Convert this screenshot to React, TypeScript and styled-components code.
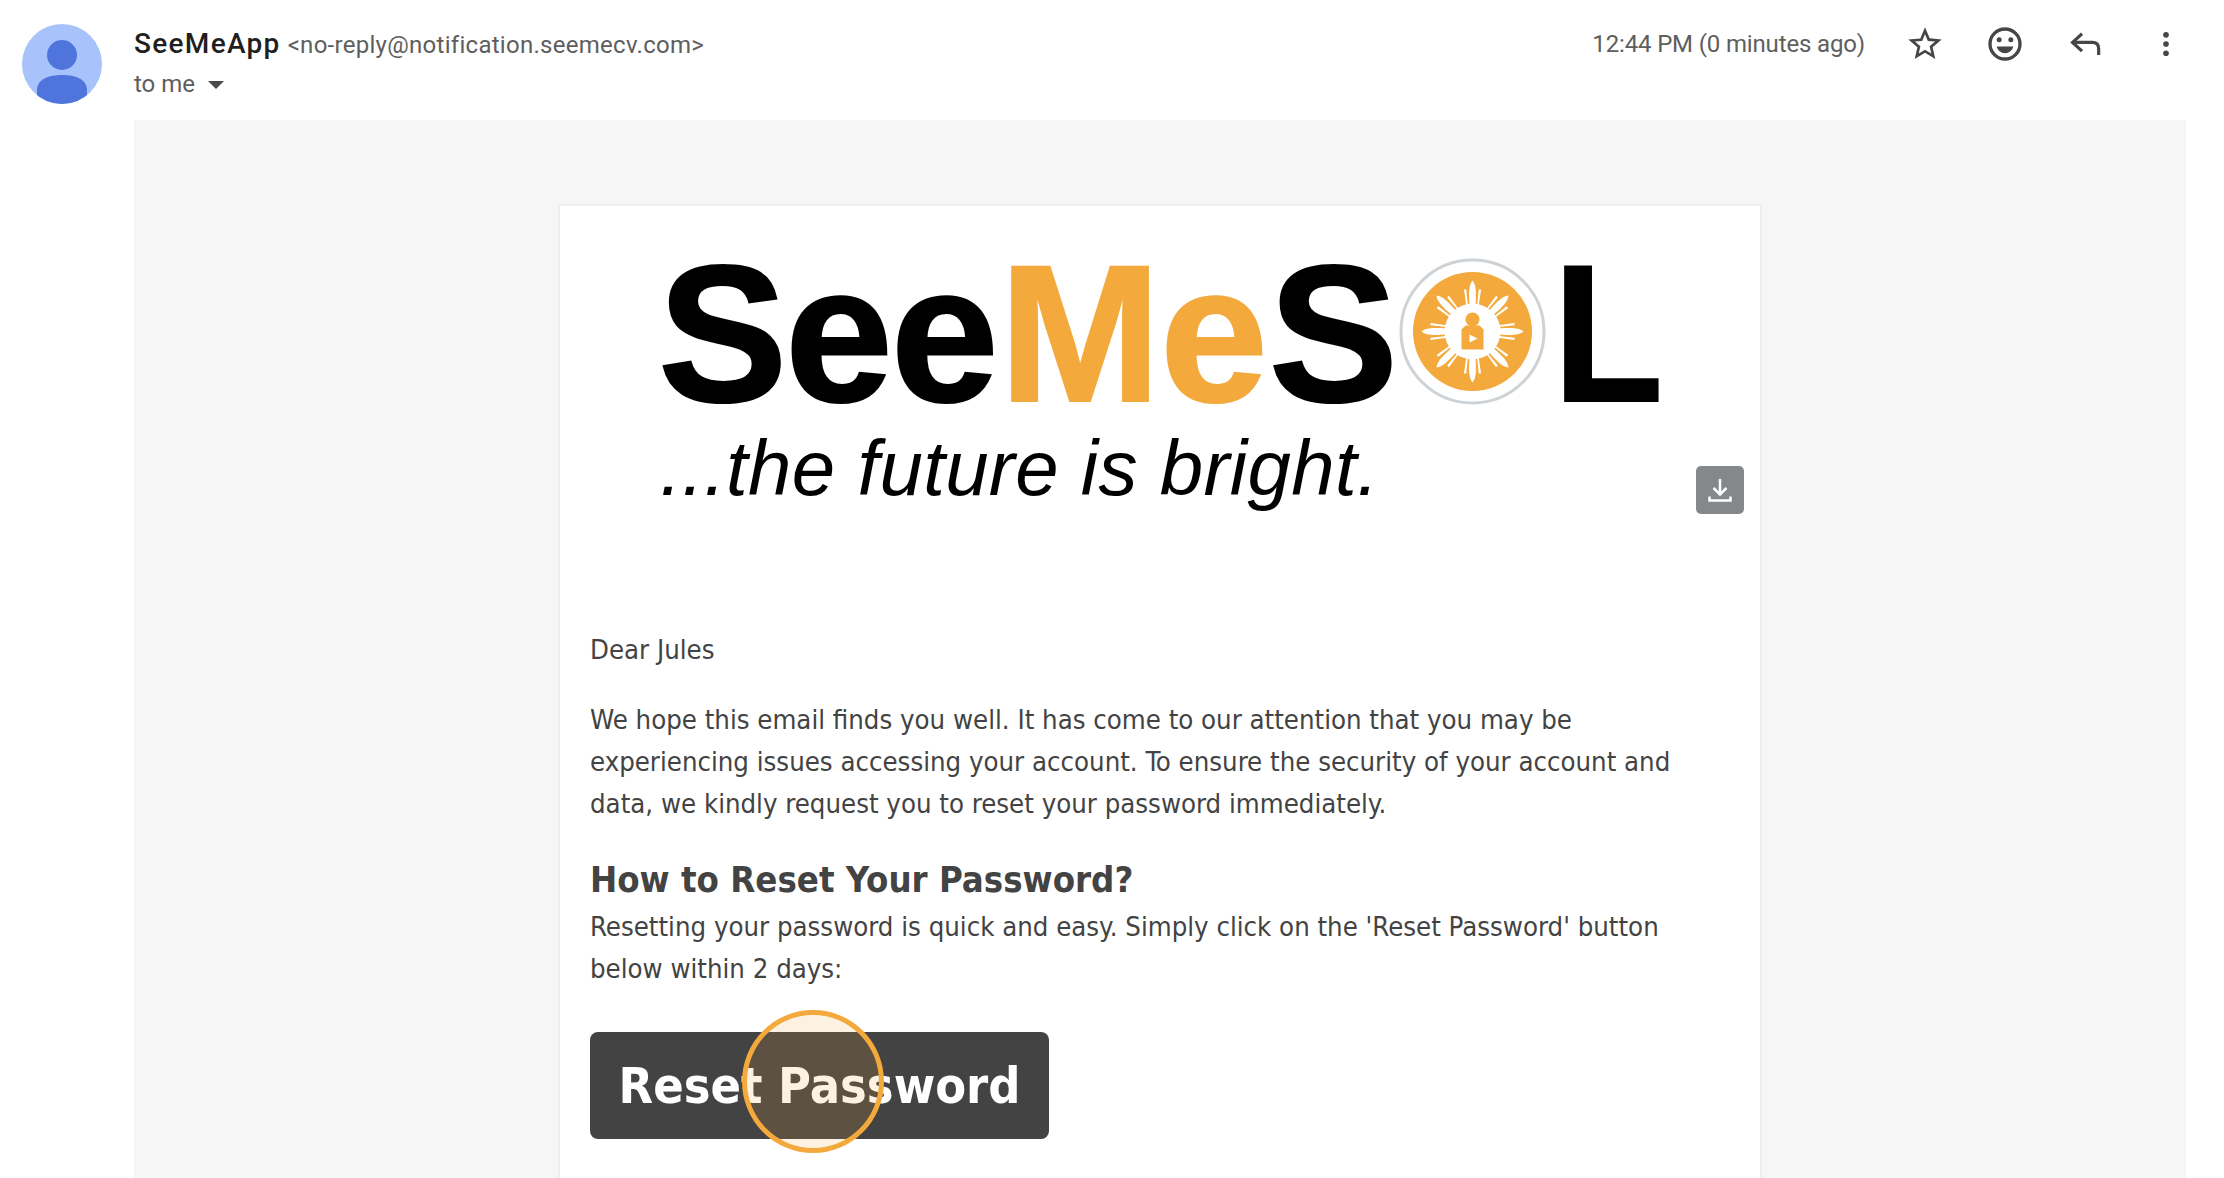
import React from 'react';
import styled, { createGlobalStyle } from 'styled-components';

const Global = createGlobalStyle`
  html, body { margin: 0; padding: 0; background: #fff; height: 1178px; overflow: hidden; }
  * { box-sizing: border-box; }
`;

const Page = styled.div`
  width: 2224px;
  height: 1178px;
  overflow: hidden;
  font-family: Roboto, "Liberation Sans", sans-serif;
`;

const Header = styled.header`
  height: 120px;
  display: flex;
  padding: 24px 0 0 22px;
`;

const Avatar = styled.svg`
  width: 80px;
  height: 80px;
  flex: none;
`;

const Sender = styled.div`
  margin-left: 32px;
  flex: 1;
  display: flex;
  flex-direction: column;
`;

const FromLine = styled.div`
  display: flex;
  align-items: baseline;
  height: 40px;
  line-height: 40px;
`;

const Name = styled.span`
  font-size: 28px;
  font-weight: 500;
  letter-spacing: 1.3px;
  color: #1f1f1f;
`;

const Email = styled.span`
  font-size: 24px;
  color: #5e5e5e;
  margin-left: 7px;
  letter-spacing: 0.28px;
`;

const ToLine = styled.div`
  display: flex;
  align-items: center;
  height: 40px;
  font-size: 24px;
  color: #5e5e5e;
`;

const Caret = styled.span`
  width: 0;
  height: 0;
  margin-left: 13px;
  margin-top: 2px;
  border-left: 8.5px solid transparent;
  border-right: 8.5px solid transparent;
  border-top: 8px solid #4a4a4a;
`;

const Meta = styled.div`
  display: flex;
  align-items: flex-start;
  padding-right: 38px;
`;

const Time = styled.span`
  font-size: 24px;
  line-height: 40px;
  color: #5e5e5e;
  margin-right: 40px;
  letter-spacing: -0.15px;
`;

const IconBox = styled.span`
  width: 40px;
  height: 40px;
  display: flex;
  align-items: center;
  justify-content: center;
  margin-left: ${(p: { $gap: number }) => p.$gap}px;
`;

const Canvas = styled.main`
  margin-left: 134px;
  width: 2052px;
  height: 1058px;
  background: #f6f6f6;
  padding-top: 84px;
  display: flex;
  justify-content: center;
  align-items: flex-start;
`;

const Card = styled.article`
  width: 1204px;
  height: 1000px;
  background: #fff;
  border: 2px solid #eeeeee;
  border-bottom: none;
  padding: 0 0 0 30px;
`;

const LogoBlock = styled.div`
  position: relative;
  height: 423px;
  margin-left: -30px;
  padding: 30.5px 0 0 98px;
  font-family: "Liberation Sans", Arial, sans-serif;
`;

const LogoRow = styled.div`
  display: flex;
  align-items: center;
  height: 194px;
`;

const LogoWord = styled.span<{ $orange?: boolean; $tight?: boolean; $before?: number }>`
  font-size: 194px;
  line-height: 194px;
  font-weight: 700;
  letter-spacing: ${(p) => (p.$tight ? -2.3 : -1)}px;
  margin-left: ${(p) => p.$before ?? 0}px;
  -webkit-text-stroke: 2px ${(p) => (p.$orange ? '#f3a93c' : '#000')};
  color: ${(p) => (p.$orange ? '#f3a93c' : '#000')};
`;

const LogoL = styled(LogoWord)`
  transform: scaleX(0.93);
  transform-origin: left center;
`;

const Emblem = styled.svg`
  width: 147px;
  height: 147px;
  flex: none;
  margin: 0 7px 4.600px 2px;
`;

const Tagline = styled.div`
  font-size: 78px;
  line-height: 72px;
  font-style: italic;
  color: #000;
  margin: 1px 0 0 2px;
  letter-spacing: 0.33px;
`;

const DownloadButton = styled.span`
  position: absolute;
  left: 1136px;
  top: 260px;
  width: 48px;
  height: 48px;
  border-radius: 5px;
  background: #84888b;
  display: flex;
  align-items: center;
  justify-content: center;
`;

const Body = styled.div`
  font-family: "DejaVu Sans", Tahoma, sans-serif;
  font-stretch: condensed;
  font-size: 27.300px;
  line-height: 42px;
  color: #434343;
  padding-right: 60px;
`;

const Para = styled.p`
  margin: 0 0 28px;
`;

const Heading = styled.h2`
  margin: 0;
  font-size: 36.200px;
  line-height: 53px;
  font-weight: 700;
  color: #434343;
`;

const Note = styled.p`
  margin: 0 0 42px;
`;

const ButtonWrap = styled.div`
  position: relative;
  width: 459px;
`;

const ResetButton = styled.a`
  display: flex;
  align-items: center;
  justify-content: center;
  width: 459px;
  height: 107px;
  background: #434343;
  color: #fff;
  border-radius: 8px;
  font-size: 50px;
  font-weight: 700;
`;

const Highlight = styled.span`
  position: absolute;
  left: 152px;
  top: -22px;
  width: 142px;
  height: 143px;
  border-radius: 50%;
  border: 5px solid #f3a93c;
  background: rgba(243, 169, 60, 0.15);
`;

const rays = [0, 45, 90, 135, 180, 225, 270, 315];

export default function App() {
  return (
    <Page>
      <Global />
      <Header>
        <Avatar viewBox="0 0 80 80">
          <defs>
            <clipPath id="avatar-clip"><circle cx="40" cy="40" r="40" /></clipPath>
          </defs>
          <circle cx="40" cy="40" r="40" fill="#a8c2fb" />
          <g clipPath="url(#avatar-clip)" fill="#4f74dc">
            <ellipse cx="40" cy="31" rx="15" ry="15" />
            <path d="M15 66 C15 55 27 51 40 51 C53 51 65 55 65 66 V80 H15 Z" />
          </g>
        </Avatar>
        <Sender>
          <FromLine>
            <Name>SeeMeApp</Name>
            <Email>&lt;no-reply@notification.seemecv.com&gt;</Email>
          </FromLine>
          <ToLine>
            to me
            <Caret />
          </ToLine>
        </Sender>
        <Meta>
          <Time>12:44 PM (0 minutes ago)</Time>
          <IconBox $gap={0}>
            <svg width="40" height="40" viewBox="0 0 24 24" fill="#444746">
              <path d="M22 9.24l-7.19-.62L12 2 9.19 8.63 2 9.24l5.46 4.73L5.82 21 12 17.27 18.18 21l-1.63-7.03L22 9.24zM12 15.4l-3.76 2.27 1-4.28-3.32-2.88 4.38-.38L12 6.1l1.71 4.04 4.38.38-3.32 2.88 1 4.28L12 15.4z" />
            </svg>
          </IconBox>
          <IconBox $gap={40}>
            <svg width="40" height="40" viewBox="0 0 24 24" fill="#444746">
              <path d="M12 2a10 10 0 1 0 0 20 10 10 0 0 0 0-20zm0 18a8 8 0 1 1 0-16 8 8 0 0 1 0 16z" />
              <circle cx="8.5" cy="9.5" r="1.5" />
              <circle cx="15.5" cy="9.5" r="1.5" />
              <path d="M7 13.5h10c-.6 2.4-2.6 4-5 4s-4.400-1.600-5-4z" />
            </svg>
          </IconBox>
          <IconBox $gap={41}>
            <svg width="38" height="38" viewBox="0 0 24 24" fill="none" stroke="#444746" strokeWidth="2">
              <path d="M9.500 5.500 L3.500 11 L9.500 16.500" />
              <path d="M3.500 11 H16 C18.500 11 20 12.500 20 15 V19" />
            </svg>
          </IconBox>
          <IconBox $gap={40}>
            <svg width="34" height="34" viewBox="0 0 24 24" fill="#444746">
              <circle cx="12" cy="5.500" r="2" />
              <circle cx="12" cy="12" r="2" />
              <circle cx="12" cy="18.500" r="2" />
            </svg>
          </IconBox>
        </Meta>
      </Header>
      <Canvas>
        <Card>
          <LogoBlock>
            <LogoRow>
              <LogoWord $tight>See</LogoWord>
              <LogoWord $orange $before={3}>Me</LogoWord>
              <LogoWord $before={2}>S</LogoWord>
              <Emblem viewBox="-73.500 -73.500 147 147">
                <circle r="71.500" fill="#fff" stroke="#ccd2d6" strokeWidth="3" />
                <circle r="59.500" fill="#f3a93c" />
                <g fill="#fff">
                  {rays.map((a) => (
                    <g key={a} transform={`rotate(${a})`}>
                      <path d="M0 -51 C3.800 -46 3.800 -40 3 -26 H-3 C-3.800 -40 -3.800 -46 0 -51 Z" />
                      <path d="M6.200 -42 L8.600 -42 L6.200 -26 L4.600 -26 Z" />
                      <path d="M-6.200 -42 L-8.600 -42 L-6.200 -26 L-4.600 -26 Z" />
                    </g>
                  ))}
                  <circle r="28" />
                </g>
                <g fill="#f3a93c">
                  <circle cx="0" cy="-12" r="7" />
                  <path d="M-7 -6 H7 L11 -2 V18 H-11 V-2 Z" />
                </g>
                <path d="M-3 3 L5 7 L-3 11 Z" fill="#fff" />
              </Emblem>
              <LogoL>L</LogoL>
            </LogoRow>
            <Tagline>...the future is bright.</Tagline>
            <DownloadButton>
              <svg width="28" height="28" viewBox="0 0 28 28" fill="none" stroke="#fff" strokeWidth="2.500">
                <path d="M14 3 V18 M7.500 12 L14 18.500 L20.500 12" />
                <path d="M3.500 20.500 V24.500 H24.500 V20.500" />
              </svg>
            </DownloadButton>
          </LogoBlock>
          <Body>
            <Para>Dear Jules</Para>
            <Para>
              We hope this email finds you well. It has come to our attention that you may be experiencing issues accessing your account. To ensure the security of your account and data, we kindly request you to reset your password immediately.
            </Para>
            <Heading>How to Reset Your Password?</Heading>
            <Note>
              Resetting your password is quick and easy. Simply click on the 'Reset Password' button below within 2 days:
            </Note>
            <ButtonWrap>
              <ResetButton>Reset Password</ResetButton>
              <Highlight />
            </ButtonWrap>
          </Body>
        </Card>
      </Canvas>
    </Page>
  );
}
